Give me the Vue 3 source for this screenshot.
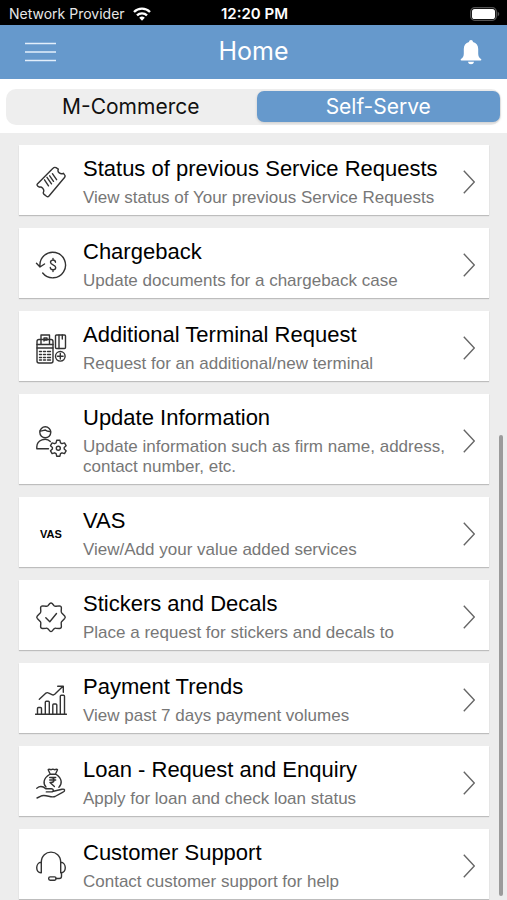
<script setup>
import { ref } from 'vue'

const activeTab = ref('self')

const tabs = [
  { id: 'commerce', label: 'M-Commerce' },
  { id: 'self', label: 'Self-Serve' }
]

const services = [
  { id: 1, icon: 'ticket', title: 'Status of previous Service Requests', text: 'View status of Your previous Service Requests' },
  { id: 2, icon: 'chargeback', title: 'Chargeback', text: 'Update documents for a chargeback case' },
  { id: 3, icon: 'terminal', title: 'Additional Terminal Request', text: 'Request for an additional/new terminal' },
  { id: 4, icon: 'user', title: 'Update Information', text: 'Update information such as firm name, address, contact number, etc.' },
  { id: 5, icon: 'vas', title: 'VAS', text: 'View/Add your value added services' },
  { id: 6, icon: 'badge', title: 'Stickers and Decals', text: 'Place a request for stickers and decals to' },
  { id: 7, icon: 'chart', title: 'Payment Trends', text: 'View past 7 days payment volumes' },
  { id: 8, icon: 'loan', title: 'Loan - Request and Enquiry', text: 'Apply for loan and check loan status' },
  { id: 9, icon: 'headset', title: 'Customer Support', text: 'Contact customer support for help' }
]
</script>

<template>
<div class="app">
  <div class="status-bar">
    <div class="network">
      <span>Network Provider</span>
      <svg width="18" height="14" viewBox="0 0 18 14" fill="none" stroke="#fff" stroke-width="2.3">
        <path d="M1 5a11.3 11.3 0 0 1 16 0" />
        <path d="M4 8.4a7 7 0 0 1 10 0" />
        <path d="M9 13.8 6.2 10.8a4 4 0 0 1 5.6 0z" fill="#fff" stroke="none" />
      </svg>
    </div>
    <span class="time">12:20 PM</span>
    <div class="battery">
      <svg width="30" height="14" viewBox="0 0 30 14">
        <rect x="0.7" y="0.7" width="25.6" height="12.6" rx="4" fill="none" stroke="#555" stroke-width="1.3" />
        <rect x="2" y="2" width="23" height="10" rx="2.6" fill="#fff" />
        <path d="M27.6 4.6q3.4 2.4 0 4.8z" fill="#555" />
      </svg>
    </div>
  </div>

  <header class="header">
    <button class="icon-button" aria-label="Menu">
      <svg width="32" height="20" viewBox="0 0 32 20" stroke="#e3effb" stroke-width="1.6">
        <path d="M0 1.5h31M0 10h31M0 18.5h31" />
      </svg>
    </button>
    <h1>Home</h1>
    <button class="icon-button bell" aria-label="Notifications">
      <svg width="22" height="26" viewBox="0 0 22 26" fill="#fff">
        <path d="M11 1c1.2 0 1.9.8 2 2 3.5.9 5.2 3.6 5.2 7v4.5c0 2.5.8 4.2 2.8 5.6.6.5.4 1.4-.4 1.4H1.4c-.8 0-1-.9-.4-1.4 2-1.4 2.8-3.100 2.8-5.6V10c0-3.400 1.700-6.100 5.200-7 .1-1.200.8-2 2-2z" />
        <path d="M8 22.700h6c-.3 1.700-1.400 2.500-3 2.500s-2.700-.8-3-2.500z" />
      </svg>
    </button>
  </header>

  <nav class="tabs">
    <div class="segment">
      <button v-for="tab in tabs" :key="tab.id" :class="{ active: activeTab === tab.id }" @click="activeTab = tab.id">{{ tab.label }}</button>
    </div>
  </nav>

  <main class="content">
    <ul class="services">
      <li v-for="service in services" :key="service.id">
        <a href="#" class="card" @click.prevent>
          <span v-if="service.icon === 'vas'" class="vas">VAS</span>
          <svg v-else class="icon" viewBox="0 0 32 32">
            <g v-if="service.icon === 'ticket'">
              <path d="M18 2.300 2.600 17.700q-1.200 1.300.2 2.400l1.600 1.100c2-.9 5.500 2 4 5-.3.900 0 1.600.7 2.200l2.400 1.800q1.400 1 2.500-.2L29.500 11.500q1.100-1.500.1-2.600l-1.300-1.600c-2.700 1.300-6.400-.9-5-4.100l-2.300-1.500q-1.600-.9-3 .6z" />
              <path d="m9.500 13.800 4 6M12 11.300l4.500 6.500M14.700 9.800l3.800 5.500M17.400 7.700l4.200 6" />
            </g>
            <g v-else-if="service.icon === 'chargeback'">
              <path d="M5 17.500A12.800 12.800 0 1 1 7.700 24M1.500 14.300 5 18l4.500-3" />
              <path d="M20.500 13.200c-.4-3-5-2.700-5 .1 0 3 5.200 2 5.200 5.200 0 3-5.200 3-5.400 0M18 9.500v1.600M18 20.800v1.700" />
            </g>
            <g v-else-if="service.icon === 'terminal'">
              <rect x="2" y="7.500" width="16" height="23.500" rx="2" />
              <path d="M6 12V3h8.500v9M2 12.500h16M2 16h16M9 9V6h3v2H9" />
              <path d="M4.500 19.500h2m2 0h2m2 0h3M4.500 22.500h2m2 0h2m2 0h3M4.500 25.500h2m2 0h2m2 0h3M4.500 28h2m2 0h2m2 0h3" />
              <rect x="20.500" y="3" width="10" height="13.500" rx="1" />
              <path d="M24 3v13.500M27.300 3v4" />
              <circle cx="25.300" cy="24.300" r="4.800" />
              <path d="M25.300 21.500v5.600M22.500 24.300h5.600" />
            </g>
            <g v-else-if="service.icon === 'user'">
              <circle cx="10.300" cy="7.300" r="5.500" />
              <path d="M5 6c3 0 4-1 5.300-1 1.700 1.500 3 1.700 5.200 1.500M13.500 23.800H1.800v-2c0-7 9.200-9.900 13.500-5.300" />
              <path d="m21.700 15.300 3.200 0 .6 2.500 1.500.9 2.500-.8 1.600 2.800-1.900 1.700v1.700l1.900 1.700-1.600 2.800-2.500-.8-1.500.9-.6 2.500h-3.200l-.6-2.500-1.500-.9-2.500.8-1.600-2.800 1.900-1.700v-1.700l-1.900-1.700 1.600-2.800 2.500.8 1.500-.9z" />
              <circle cx="23.300" cy="23.200" r="2" />
            </g>
            <g v-else-if="service.icon === 'badge'">
              <path d="M14.800 2.500q1.200-1.200 2.400 0l1.900 2.200q.8.700 1.900.5l3.400-.3q1.900 0 2 2l-.2 3.200q-.1 1.100.6 1.900l2.900 3q1.100 1.200 0 2.400l-2.900 3q-.7.800-.6 1.900l.2 3.200q-.1 2-2 2l-3.400-.3q-1.100-.2-1.900.5l-1.900 2.200q-1.200 1.200-2.400 0l-1.900-2.200q-.8-.7-1.900-.5l-3.400.3q-1.900 0-2-2l.2-3.200q.1-1.100-.6-1.900l-2.900-3q-1.100-1.200 0-2.400l2.900-3q.7-.8.6-1.900l-.2-3.200q.1-2 2-2l3.400.3q1.100.2 1.900-.5z" />
              <path d="m10.800 16.700 4 4 6.700-8.200" />
            </g>
            <g v-else-if="service.icon === 'chart'">
              <path d="M.5 30.300h31M2.500 30V24.500q0-1 1-1h2q1 0 1 1V30M10.300 30V18.300q0-1 1-1h2q1 0 1 1V30M17.800 30V21q0-1 1-1h2q1 0 1 1V30M25.300 30V12.200q0-1 1-1h2.200q1 0 1 1V30" />
              <path d="m4.300 15.300 6.700-6.200q1-.8 2.200-.2l4.300 1.900q1.200.4 2.200-.5l8-7.800M22.700 2.300h5.600v5.900" />
            </g>
            <g v-else-if="service.icon === 'loan'">
              <path d="M15.300 7.200 13.300 3q-.3-.9.700-.9l2.200.6 1.600-.6 1.700.6 2.200-.6q1 0 .7.900l-2 4.200zM14.500 7.500c-6.500 4-6.500 9.500-3.500 12.500M21.300 7.500c6 4 6 9.500 2.600 12.700" />
              <path d="M14.700 10.500h6M14.700 13h6M16 10.500c4 0 4 5 0 5h-1l4.400 4" />
              <path d="M1.800 21.200c3-2.500 6.500-1.700 9 .5h5.500c2.700 0 2.600 3.200 0 3.200h-5M18.500 24.200l8.500-2c3-.6 3.500 1.800 1 2.900l-8 4.400c-4 1.500-8-1.800-13-.8l-5 2.300" />
            </g>
            <g v-else>
              <path d="M6.300 12.300C6.300-1.300 25.700-1.300 25.700 12.300M6.300 12.300v10.500C.2 23.300.2 12.500 6.300 12.300zM25.700 12.300v10.500c6.100.5 6.100-10.300 0-10.500z" />
              <path d="M26.500 22.800v3.400q0 2.300-2.300 2.300H21" />
              <rect x="13.700" y="26.900" width="7.300" height="3.300" rx="1.400" />
            </g>
          </svg>
          <div class="info">
            <h2>{{ service.title }}</h2>
            <p>{{ service.text }}</p>
          </div>
          <svg class="chevron" viewBox="0 0 12 24">
            <path d="M.8.800 11.300 12 .8 23.200" />
          </svg>
        </a>
      </li>
    </ul>
    <div class="scroll-thumb"></div>
  </main>
</div>
</template>

<style>
body {
  margin: 0;
}
</style>

<style scoped>
.app {
  height: 100vh;
  display: flex;
  flex-direction: column;
  overflow: hidden;
  background: #ededed;
  font-family: "Liberation Sans", Arial, sans-serif;
}

.status-bar {
  flex: none;
  height: 25px;
  padding: 2px 7px 0 9px;
  box-sizing: border-box;
  display: grid;
  grid-template-columns: 1fr auto 1fr;
  align-items: center;
  background: #000;
  color: #fff;
  font-family: Inter, sans-serif;
  font-size: 14px;
}

.network {
  display: flex;
  align-items: center;
  gap: 8px;
  color: #e6e6e6;
}

.time {
  font-size: 15px;
  line-height: 18px;
  font-weight: 600;
}

.battery {
  display: flex;
  justify-content: flex-end;
}

.header {
  flex: none;
  height: 54px;
  padding: 0 25px;
  display: grid;
  grid-template-columns: 1fr auto 1fr;
  align-items: center;
  background: #6699cc;
  font-family: Inter, sans-serif;
}

.header h1 {
  margin: 0 0 2px 0;
  color: #fff;
  font-size: 25px;
  line-height: 30px;
  font-weight: 400;
}

.icon-button {
  display: flex;
  justify-self: start;
  border: none;
  padding: 0;
  background: none;
}

.bell {
  justify-self: end;
}

.tabs {
  flex: none;
  padding: 10px 6px 8px 6px;
  background: #fff;
}

.segment {
  display: flex;
  gap: 4px;
  padding: 2px 1px 3px 3px;
  border-radius: 10px;
  background: #eeeeee;
}

.segment button {
  flex: 1;
  height: 31px;
  border: none;
  border-radius: 7px;
  padding: 0;
  background: none;
  color: #111;
  font-family: Inter, sans-serif;
  font-size: 21px;
}

.segment button.active {
  background: #6699cc;
  color: #fff;
  box-shadow: 0 1px 3px rgba(0, 0, 0, 0.15);
}

.content {
  position: relative;
  flex: 1;
  min-height: 0;
  overflow: hidden;
}

.services {
  list-style: none;
  margin: 0;
  padding: 12px 18px 0 19px;
  display: flex;
  flex-direction: column;
  gap: 13px;
}

.card {
  display: flex;
  align-items: center;
  gap: 16px;
  padding: 10px 14px 7px 16px;
  background: #fff;
  box-shadow: 0 1px 1px rgba(0, 0, 0, 0.2);
  color: #000;
  text-decoration: none;
}

.icon {
  flex: none;
  width: 32px;
  height: 32px;
  fill: none;
  stroke: #333;
  stroke-width: 1.4;
  stroke-linejoin: round;
  stroke-linecap: round;
}

.vas {
  flex: none;
  width: 32px;
  text-align: center;
  font-size: 11px;
  font-weight: bold;
}

.info {
  flex: 1;
}

.info h2 {
  margin: 0;
  font-size: 22px;
  line-height: 28px;
  font-weight: 400;
}

.info p {
  margin: 5px 0 0 0;
  color: #777;
  font-size: 17px;
  line-height: 20px;
}

.chevron {
  flex: none;
  width: 12px;
  height: 24px;
  fill: none;
  stroke: #666;
  stroke-width: 1.4;
}

.scroll-thumb {
  position: absolute;
  top: 39.4%;
  right: 4px;
  bottom: 4px;
  width: 4px;
  border-radius: 2px;
  background: #9b9b9b;
}
</style>
